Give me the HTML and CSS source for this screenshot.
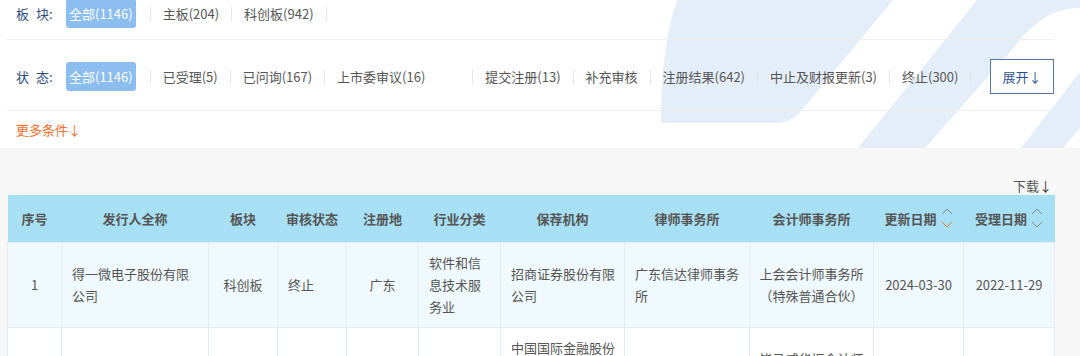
FILE: index.html
```html
<!DOCTYPE html>
<html lang="zh-CN">
<head>
    <meta charset="UTF-8">
    <meta name="viewport" content="width=device-width, initial-scale=1.0">
    <title>项目动态</title>
    <link rel="stylesheet" href="styles.css">
</head>
<body>

    <!-- 筛选条件 -->
    <div class="filter-panel">
        <svg class="filter-bg" viewBox="640 0 440 148" width="440" height="148" aria-hidden="true">
            <path d="M661 123 C661 70 667 28 677 0 L893 0 L802 110 Q792 123 775 123 Z"/>
            <path d="M977 0 L1080 0 L1080 8 C1052 8 1032 24 1015 46 L925 148 L858 148 Z"/>
            <path d="M1080 72 L1080 128 L1063 148 L1021 148 Z"/>
        </svg>

        <div class="filter-row first">
            <span class="filter-label">板 块:</span>
            <ul class="filter-list">
                <li class="filter-item active"><span>全部(1146)</span></li>
                <li class="filter-item">主板(204)</li>
                <li class="filter-item">科创板(942)</li>
            </ul>
        </div>

        <div class="filter-row status">
            <span class="filter-label">状 态:</span>
            <ul class="filter-list">
                <li class="filter-item active"><span>全部(1146)</span></li>
                <li class="filter-item">已受理(5)</li>
                <li class="filter-item">已问询(167)</li>
                <li class="filter-item spaced">上市委审议(16)</li>
                <li class="filter-item">提交注册(13)</li>
                <li class="filter-item">补充审核</li>
                <li class="filter-item">注册结果(642)</li>
                <li class="filter-item">中止及财报更新(3)</li>
                <li class="filter-item">终止(300)</li>
            </ul>
            <button class="expand-btn">展开↓</button>
        </div>

        <div class="filter-more">更多条件↓</div>
    </div>

    <!-- 列表 -->
    <div class="toolbar">
        <span class="download">下载<b>↓</b></span>
    </div>

    <table class="ipo-table">
        <colgroup>
            <col style="width:54px"><col style="width:147px"><col style="width:69px"><col style="width:69px">
            <col style="width:72px"><col style="width:82px"><col style="width:124px"><col style="width:125px">
            <col style="width:124px"><col style="width:90px"><col style="width:91px">
        </colgroup>
        <thead>
            <tr>
                <th>序号</th>
                <th>发行人全称</th>
                <th>板块</th>
                <th>审核状态</th>
                <th>注册地</th>
                <th>行业分类</th>
                <th>保荐机构</th>
                <th>律师事务所</th>
                <th>会计师事务所</th>
                <th>
                    <span class="sortable">更新日期
                        <svg class="sort-icon" viewBox="0 0 12 22" width="12" height="22">
                            <polyline points="1,7 6,2 11,7"/>
                            <polyline class="on" points="1,15 6,20 11,15"/>
                        </svg>
                    </span>
                </th>
                <th>
                    <span class="sortable">受理日期
                        <svg class="sort-icon" viewBox="0 0 12 22" width="12" height="22">
                            <polyline points="1,7 6,2 11,7"/>
                            <polyline points="1,15 6,20 11,15"/>
                        </svg>
                    </span>
                </th>
            </tr>
        </thead>
        <tbody>
            <tr class="odd">
                <td class="center">1</td>
                <td>得一微电子股份有限公司</td>
                <td class="center">科创板</td>
                <td>终止</td>
                <td class="center">广东</td>
                <td>软件和信息技术服务业</td>
                <td>招商证券股份有限公司</td>
                <td>广东信达律师事务所</td>
                <td class="center">上会会计师事务所（特殊普通合伙）</td>
                <td class="center">2024-03-30</td>
                <td class="center">2022-11-29</td>
            </tr>
            <tr>
                <td class="center">2</td>
                <td>北京华卓精科科技股份有限公司</td>
                <td class="center">科创板</td>
                <td>终止</td>
                <td class="center">北京</td>
                <td>专用设备制造业</td>
                <td>中国国际金融股份有限公司、华泰联合证券有限责任公司</td>
                <td>北京市中伦律师事务所</td>
                <td class="center">毕马威华振会计师事务所（特殊普通合伙）</td>
                <td class="center">2024-03-29</td>
                <td class="center">2022-06-30</td>
            </tr>
        </tbody>
    </table>

</body>
</html>
```

FILE: styles.css
```css
* {
    box-sizing: border-box;
}

body {
    margin: 0;
    background: #f7f7f7;
    font-family: "Noto Sans CJK SC", "Noto Sans", sans-serif;
    font-size: 13px;
    color: #555555;
}

/* Filter Panel */
.filter-panel {
    position: relative;
    background: #ffffff;
    overflow: hidden;
}

.filter-bg {
    position: absolute;
    top: 0;
    right: 0;
    fill: #e4eef8;
}

.filter-row {
    position: relative;
    display: flex;
    align-items: center;
    margin: 0 26px 0 7px;
    padding-left: 9px;
    border-bottom: 1px solid #eeeeee;
}

.filter-row.first {
    height: 41px;
    margin-top: -1px;
    padding-bottom: 11px;
}

.filter-row.status {
    height: 71px;
    padding-top: 19px;
    padding-bottom: 16px;
}

.filter-label {
    width: 50px;
    color: #2d4c7c;
    word-spacing: 4px;
}

.filter-list {
    display: flex;
    align-items: center;
    list-style: none;
    margin: 0;
    padding: 0;
}

.filter-item {
    display: flex;
    align-items: center;
    padding-left: 12px;
    line-height: 29px;
    white-space: nowrap;
}

.filter-item::after {
    content: '';
    width: 1px;
    height: 14px;
    margin-left: 12px;
    background: #e6e6e6;
}

.filter-item.active {
    padding-left: 0;
}

.filter-item.active::after {
    margin-left: 14px;
}

.filter-item.active span {
    padding: 0 3px;
    border-radius: 3px;
    background: #8bbdef;
    color: #ffffff;
}

.filter-item.spaced::after {
    margin-left: 47px;
}

.expand-btn {
    margin-left: auto;
    width: 64px;
    height: 35px;
    padding: 0;
    border: 1px solid #5676ad;
    background: #ffffff;
    color: #2e5395;
    font-family: inherit;
    font-size: 13px;
}

.filter-more {
    position: relative;
    height: 37px;
    padding-left: 16px;
    line-height: 37px;
    color: #f0702e;
}

/* Table */
.toolbar {
    display: flex;
    justify-content: flex-end;
    align-items: flex-end;
    height: 47px;
    padding-right: 28px;
}

.download {
    line-height: 18px;
    color: #555555;
}

.download b {
    font-weight: normal;
    color: #333333;
}

.ipo-table {
    width: 1047px;
    margin-left: 7px;
    table-layout: fixed;
    border-collapse: collapse;
}

.ipo-table th {
    height: 47px;
    padding: 0;
    background: #a7e0f4;
    color: #555555;
    font-weight: bold;
    text-align: center;
    white-space: nowrap;
}

.sortable {
    display: inline-flex;
    align-items: center;
    gap: 4px;
}

.sort-icon {
    fill: none;
    stroke: #8a8a8a;
    stroke-width: 1;
}

.sort-icon .on {
    stroke: #f07a3a;
}

.ipo-table td {
    padding: 9px 8px 9px 10px;
    line-height: 22px;
    border: 1px solid #e3ecf0;
    background: #ffffff;
    vertical-align: middle;
}

.ipo-table tr.odd td {
    background: #f0f9fd;
}

.ipo-table td.center {
    text-align: center;
    padding-left: 9px;
    padding-right: 9px;
}
```
